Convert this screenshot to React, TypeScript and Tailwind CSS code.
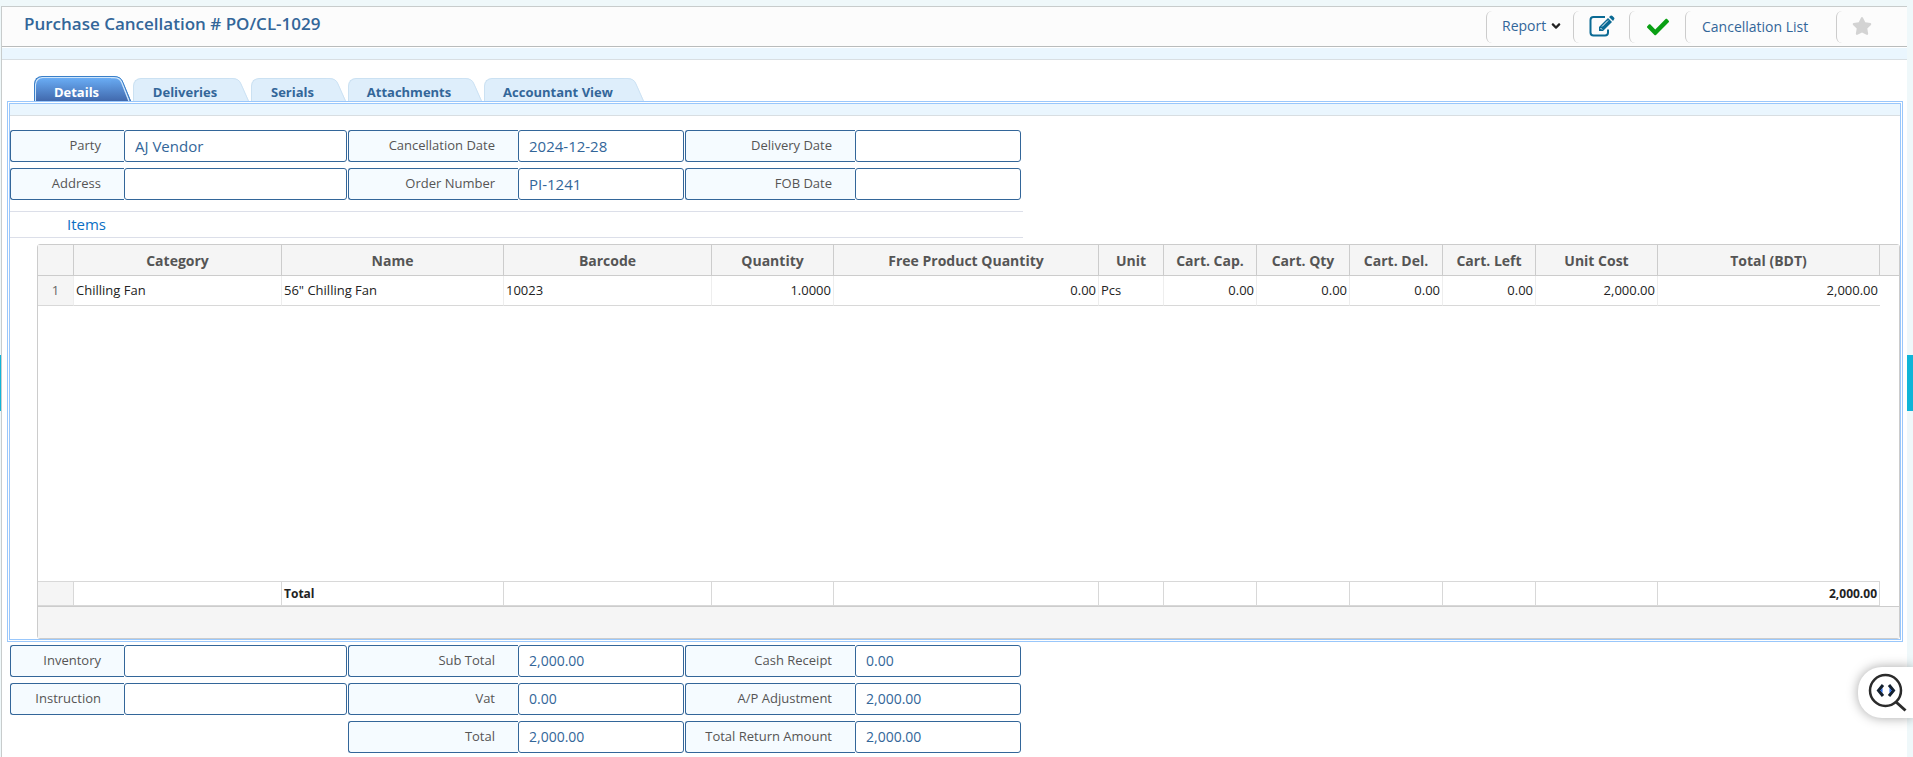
import { FaAngleDown, FaCheck, FaStar } from "react-icons/fa";

const TABS = [
  { name: "Details", width: "w-[97px]" },
  { name: "Deliveries", width: "w-[116px]" },
  { name: "Serials", width: "w-[95px]" },
  { name: "Attachments", width: "w-[134px]" },
  { name: "Accountant View", width: "w-[160px]" },
];

const COLUMNS = [
  { title: "", width: "w-9", align: "text-center", value: "1", total: "" },
  { title: "Category", width: "w-[208px]", align: "text-left", value: "Chilling Fan", total: "" },
  { title: "Name", width: "w-[222px]", align: "text-left", value: '56" Chilling Fan', total: "Total" },
  { title: "Barcode", width: "w-[208px]", align: "text-left", value: "10023", total: "" },
  { title: "Quantity", width: "w-[122px]", align: "text-right", value: "1.0000", total: "" },
  { title: "Free Product Quantity", width: "w-[265px]", align: "text-right", value: "0.00", total: "" },
  { title: "Unit", width: "w-[65px]", align: "text-left", value: "Pcs", total: "" },
  { title: "Cart. Cap.", width: "w-[93px]", align: "text-right", value: "0.00", total: "" },
  { title: "Cart. Qty", width: "w-[93px]", align: "text-right", value: "0.00", total: "" },
  { title: "Cart. Del.", width: "w-[93px]", align: "text-right", value: "0.00", total: "" },
  { title: "Cart. Left", width: "w-[93px]", align: "text-right", value: "0.00", total: "" },
  { title: "Unit Cost", width: "w-[122px]", align: "text-right", value: "2,000.00", total: "" },
  { title: "Total (BDT)", width: "w-[222px]", align: "text-right", value: "2,000.00", total: "2,000.00" },
];

export default function App() {
  return (
    <div className="relative min-h-screen bg-[#eff8fa] pl-px pr-1.5 pt-1.5 font-['Open_Sans','Noto_Sans',sans-serif] text-[#336699]">
      <main className="min-h-[calc(100vh-6px)] border-l border-t border-[#c8cccc] bg-white">
        <Toolbar />
        <div className="mt-px h-3 border-b border-[#d8dee2] bg-[#eaf6fe]" />

        <Tabs />
        <section className="ml-[5px] mr-1 border-[3px] border-double border-[#99c7fb]">
          <div className="h-3 border-b border-[#d8dee2] bg-[#eaf6fe]" />
          <div className="mt-3.5 flex gap-px text-[15px]">
            <FieldColumn>
              <Field label="Party" value="AJ Vendor" />
              <Field label="Address" />
            </FieldColumn>
            <FieldColumn>
              <Field wide label="Cancellation Date" value="2024-12-28" />
              <Field wide label="Order Number" value="PI-1241" />
            </FieldColumn>
            <FieldColumn>
              <Field wide label="Delivery Date" />
              <Field wide label="FOB Date" />
            </FieldColumn>
          </div>
          <h2 className="mt-[11px] w-[1013px] border-y border-[#dcdfe9] pl-[57px] text-[15px] leading-[25px] text-[#0b6fc4]">
            Items
          </h2>
          <ItemsGrid />
        </section>

        {/* Summary */}
        <div className="ml-2 mt-[3px] flex gap-px pb-1 text-sm">
          <FieldColumn>
            <Field label="Inventory" />
            <Field label="Instruction" />
          </FieldColumn>
          <FieldColumn>
            <Field wide label="Sub Total" value="2,000.00" />
            <Field wide label="Vat" value="0.00" />
            <Field wide label="Total" value="2,000.00" />
          </FieldColumn>
          <FieldColumn>
            <Field wide label="Cash Receipt" value="0.00" />
            <Field wide label="A/P Adjustment" value="2,000.00" />
            <Field wide label="Total Return Amount" value="2,000.00" />
          </FieldColumn>
        </div>
      </main>

      {/* Side drawer handles */}
      <div className="absolute left-0 top-[355px] h-14 w-px bg-[#0fb5d8]" />
      <div className="absolute right-0 top-[355px] h-14 w-1.5 bg-[#0fb5d8]" />

      <button
        aria-label="Inspect"
        className="fixed right-0 top-[667px] h-[51px] w-[55px] rounded-l-3xl bg-white shadow-[0_0_12px_rgba(0,0,0,0.35)]"
      >
        <InspectIcon />
      </button>
    </div>
  );
}

function Toolbar() {
  return (
    <header className="flex h-10 items-center justify-between border-b border-[#b9bcbc] bg-[#fcfcfc]">
      <h1 className="mb-1.5 pl-[22px] text-[17px] font-semibold">Purchase Cancellation # PO/CL-1029</h1>
      <nav className="flex h-8 text-sm">
        <button className="flex w-[87px] items-center gap-[3px] rounded-md border-l border-[#cccccc] pb-0.5 pl-[15px]">
          Report
          <FaAngleDown className="size-3.5 text-[#222222]" />
        </button>
        <button aria-label="Edit" className="w-14 rounded-md border-l border-[#cccccc] pb-0.5 pl-[15px]">
          <EditIcon />
        </button>
        <button aria-label="Approve" className="w-14 rounded-md border-l border-[#cccccc] pl-[17px]">
          <FaCheck className="size-[22px] text-[#0aa014]" />
        </button>
        <a href="#list" className="flex w-[151px] items-center rounded-md border-l border-[#cccccc] pl-4">
          Cancellation List
        </a>
        <button aria-label="Favourite" className="w-[71px] rounded-md border-l border-[#cccccc] pb-0.5 pl-[15px]">
          <FaStar className="size-5 text-[#d3d3d3]" />
        </button>
      </nav>
    </header>
  );
}

function Tabs() {
  return (
    <div role="tablist" className="ml-8 flex h-[41px] items-end gap-0.5">
      {TABS.map((tab, i) => (
        <button
          key={tab.name}
          role="tab"
          aria-selected={i === 0}
          className={`relative flex items-center justify-center text-[13px] font-bold ${tab.width} ${
            i === 0 ? "h-[25px] text-white" : "h-[23px]"
          }`}
        >
          <TabShape active={i === 0} />
          <span className={`relative pr-3 ${i === 0 ? "pt-2" : "pt-1.5"}`}>{tab.name}</span>
        </button>
      ))}
    </div>
  );
}

// The slanted right edge keeps its size, the left part stretches with the tab.
function TabShape({ active }: { active: boolean }) {
  return (
    <span className="absolute inset-0 flex">
      <span
        className={`flex-1 rounded-tl-lg border-l border-t ${
          active
            ? "border-[#3a7fc8] bg-linear-to-b from-[#6cb0f8] to-[#4169ad] shadow-[inset_1px_1px_0_#cfe5fa]"
            : "border-[#cbe1f2] bg-[#deeefb]"
        }`}
      />
      <svg viewBox="0 0 20 25" preserveAspectRatio="none" className="h-full w-5">
        <defs>
          <linearGradient id="tabActive" x1="0" y1="0" x2="0" y2="1">
            <stop offset="0" stopColor="#6cb0f8" />
            <stop offset="1" stopColor="#4169ad" />
          </linearGradient>
        </defs>
        <path d="M0 0H3Q10 0 12 6L20 25H0Z" fill={active ? "url(#tabActive)" : "#deeefb"} />
        {active && <path d="M0 1.5H3Q9 1.5 11 7L18 25" fill="none" stroke="#cfe5fa" strokeWidth="1.5" />}
        <path d="M0 .5H3Q10 .5 12 6.5L19.500 25" fill="none" stroke={active ? "#3a7fc8" : "#cbe1f2"} />
      </svg>
    </span>
  );
}

function FieldColumn({ children }: { children: React.ReactNode }) {
  return <div className="flex flex-col gap-1.5">{children}</div>;
}

function Field({ label, value = "", wide = false }: { label: string; value?: string; wide?: boolean }) {
  return (
    <label className="flex h-8">
      <span
        className={`rounded-l-[3px] border border-r-0 border-[#336699] bg-[#f5fbff] pr-[23px] text-right text-[13px] leading-7 text-[#555555] ${
          wide ? "w-[170px]" : "w-[114px]"
        }`}
      >
        {label}
      </span>
      <input
        readOnly
        defaultValue={value}
        className={`rounded-[3px] border border-[#336699] bg-white pl-2.5 outline-none ${
          wide ? "w-[166px]" : "w-[223px]"
        }`}
      />
    </label>
  );
}

function ItemsGrid() {
  return (
    <div className="ml-[27px] mt-1.5 rounded-[3px] border border-[#cccccc]">
      <table className="w-full table-fixed border-separate border-spacing-0 text-[13px] text-[#222222]">
        <thead>
          <tr className="h-[31px] bg-[#f5f5f5] text-sm text-[#555555]">
            {COLUMNS.map((col) => (
              <th key={col.title} className={`border-b border-r border-[#cccccc] px-0 pb-0 pt-0.5 font-bold ${col.width}`}>
                {col.title}
              </th>
            ))}
            <th className="border-b border-[#cccccc] p-0" />
          </tr>
        </thead>
        <tbody>
          <tr className="h-[30px]">
            {COLUMNS.map((col, i) => (
              <td
                key={col.title}
                className={`border-b border-b-[#d8d8d8] px-0.5 pb-0 pt-px ${col.align} ${
                  i === 0 ? "bg-[#f5f5f5] text-[#666666]" : ""
                } ${i < COLUMNS.length - 1 ? "border-r border-r-[#eeeeee]" : ""}`}
              >
                {col.value}
              </td>
            ))}
            <td />
          </tr>
          <tr className="h-[275px]">
            <td colSpan={COLUMNS.length + 1} />
          </tr>
        </tbody>
        <tfoot>
          <tr className="h-[25px] text-xs font-bold">
            {COLUMNS.map((col, i) => (
              <td
                key={col.title}
                className={`border-y border-r border-[#d8d8d8] px-0.5 py-0 ${col.align} ${i === 0 ? "bg-[#f5f5f5]" : ""}`}
              >
                {col.total}
              </td>
            ))}
            <td />
          </tr>
        </tfoot>
      </table>
      <div className="h-8 border-t border-[#cccccc] bg-[#f5f5f5]" />
    </div>
  );
}

function EditIcon() {
  return (
    <svg viewBox="0 0 26 22" className="h-[22px] w-[26px]" fill="none">
      <path
        d="M16 2H4.500Q1.500 2 1.500 5V17.500Q1.500 20.500 4.500 20.500H16Q19 20.500 19 17.500V14.500"
        stroke="#0b6a94"
        strokeWidth="2"
      />
      <path d="M10 12L19 3L23 7L14 16H10Z" fill="#0b6a94" />
      <path d="M20 2L21.500 .8Q22.500 0 23.500 1L25 2.500Q26 3.500 25 4.500L24 6Z" fill="#0b6a94" />
      <path d="M13 11.500L19 5.500M11.500 13L13 14.500" stroke="#ffffff" />
    </svg>
  );
}

function InspectIcon() {
  return (
    <svg viewBox="0 0 55 51" className="h-[51px] w-[55px]" fill="none">
      <circle cx="27.500" cy="23.500" r="15.500" stroke="#2b2b2b" strokeWidth="2.500" />
      <path d="M38 35L47.500 43.500" stroke="#2b2b2b" strokeWidth="3" />
      <path d="M25 18L20.500 23.500L25 29M31 18L35.500 23.500L31 29" stroke="#14202e" strokeWidth="3" />
      <path d="M24.500 21V26L22.500 23.500ZM31.500 21V26L33.500 23.500Z" fill="#1d63ed" />
    </svg>
  );
}
